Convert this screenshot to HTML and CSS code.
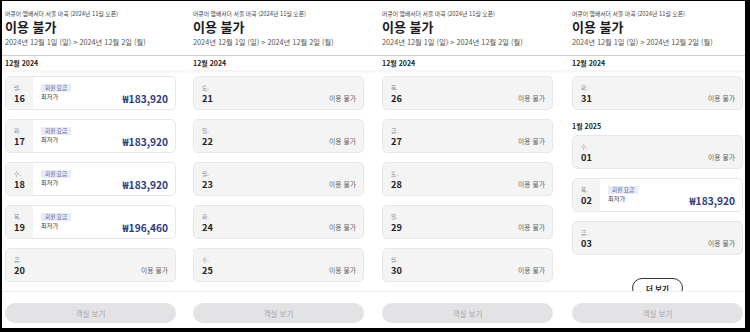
FILE: index.html
```html
<!DOCTYPE html>
<html lang="ko">
<head>
<meta charset="utf-8">
<link rel="stylesheet" href="styles.css">
</head>
<body>
<div class="frame">
  <!-- Panel 1 -->
  <section class="panel p1">
    <header class="head">
      <div class="hotel">머큐어 앰배서더 서울 마곡 (2024년 11월 오픈)</div>
      <h1 class="title">이용 불가</h1>
      <div class="dates">2024년 12월 1일 (일) &gt; 2024년 12월 2일 (월)</div>
    </header>
    <div class="scroll">
      <div class="month sticky">12월 2024</div>
      <div class="list">
        <div class="card ok"><div class="day"><span class="dow">월.</span><span class="num">16</span></div><div class="info"><div class="meta"><span class="badge">회원 요금</span><span class="low">최저가</span></div><span class="price">₩183,920</span></div></div>
        <div class="card ok"><div class="day"><span class="dow">화.</span><span class="num">17</span></div><div class="info"><div class="meta"><span class="badge">회원 요금</span><span class="low">최저가</span></div><span class="price">₩183,920</span></div></div>
        <div class="card ok"><div class="day"><span class="dow">수.</span><span class="num">18</span></div><div class="info"><div class="meta"><span class="badge">회원 요금</span><span class="low">최저가</span></div><span class="price">₩183,920</span></div></div>
        <div class="card ok"><div class="day"><span class="dow">목.</span><span class="num">19</span></div><div class="info"><div class="meta"><span class="badge">회원 요금</span><span class="low">최저가</span></div><span class="price">₩196,460</span></div></div>
        <div class="card na"><div class="day"><span class="dow">금.</span><span class="num">20</span></div><div class="info"><span class="na-text">이용 불가</span></div></div>
      </div>
    </div>
    <footer class="foot"><button class="book">객실 보기</button></footer>
  </section>

  <!-- Panel 2 -->
  <section class="panel p2">
    <header class="head">
      <div class="hotel">머큐어 앰배서더 서울 마곡 (2024년 11월 오픈)</div>
      <h1 class="title">이용 불가</h1>
      <div class="dates">2024년 12월 1일 (일) &gt; 2024년 12월 2일 (월)</div>
    </header>
    <div class="scroll">
      <div class="month sticky">12월 2024</div>
      <div class="list">
        <div class="card na"><div class="day"><span class="dow">토.</span><span class="num">21</span></div><div class="info"><span class="na-text">이용 불가</span></div></div>
        <div class="card na"><div class="day"><span class="dow">일.</span><span class="num">22</span></div><div class="info"><span class="na-text">이용 불가</span></div></div>
        <div class="card na"><div class="day"><span class="dow">월.</span><span class="num">23</span></div><div class="info"><span class="na-text">이용 불가</span></div></div>
        <div class="card na"><div class="day"><span class="dow">화.</span><span class="num">24</span></div><div class="info"><span class="na-text">이용 불가</span></div></div>
        <div class="card na"><div class="day"><span class="dow">수.</span><span class="num">25</span></div><div class="info"><span class="na-text">이용 불가</span></div></div>
      </div>
    </div>
    <footer class="foot"><button class="book">객실 보기</button></footer>
  </section>

  <!-- Panel 3 -->
  <section class="panel p3">
    <header class="head">
      <div class="hotel">머큐어 앰배서더 서울 마곡 (2024년 11월 오픈)</div>
      <h1 class="title">이용 불가</h1>
      <div class="dates">2024년 12월 1일 (일) &gt; 2024년 12월 2일 (월)</div>
    </header>
    <div class="scroll">
      <div class="month sticky">12월 2024</div>
      <div class="list">
        <div class="card na"><div class="day"><span class="dow">목.</span><span class="num">26</span></div><div class="info"><span class="na-text">이용 불가</span></div></div>
        <div class="card na"><div class="day"><span class="dow">금.</span><span class="num">27</span></div><div class="info"><span class="na-text">이용 불가</span></div></div>
        <div class="card na"><div class="day"><span class="dow">토.</span><span class="num">28</span></div><div class="info"><span class="na-text">이용 불가</span></div></div>
        <div class="card na"><div class="day"><span class="dow">일.</span><span class="num">29</span></div><div class="info"><span class="na-text">이용 불가</span></div></div>
        <div class="card na"><div class="day"><span class="dow">월.</span><span class="num">30</span></div><div class="info"><span class="na-text">이용 불가</span></div></div>
      </div>
    </div>
    <footer class="foot"><button class="book">객실 보기</button></footer>
  </section>

  <!-- Panel 4 -->
  <section class="panel p4">
    <header class="head">
      <div class="hotel">머큐어 앰배서더 서울 마곡 (2024년 11월 오픈)</div>
      <h1 class="title">이용 불가</h1>
      <div class="dates">2024년 12월 1일 (일) &gt; 2024년 12월 2일 (월)</div>
    </header>
    <div class="scroll">
      <div class="month sticky">12월 2024</div>
      <div class="list">
        <div class="card na"><div class="day"><span class="dow">화.</span><span class="num">31</span></div><div class="info"><span class="na-text">이용 불가</span></div></div>
        <div class="month inline">1월 2025</div>
        <div class="card na"><div class="day"><span class="dow">수.</span><span class="num">01</span></div><div class="info"><span class="na-text">이용 불가</span></div></div>
        <div class="card ok"><div class="day"><span class="dow">목.</span><span class="num">02</span></div><div class="info"><div class="meta"><span class="badge">회원 요금</span><span class="low">최저가</span></div><span class="price">₩183,920</span></div></div>
        <div class="card na"><div class="day"><span class="dow">금.</span><span class="num">03</span></div><div class="info"><span class="na-text">이용 불가</span></div></div>
        <div class="more-wrap"><button class="more">더 보기</button></div>
      </div>
    </div>
    <footer class="foot"><button class="book">객실 보기</button></footer>
  </section>
</div>
</body>
</html>
```

FILE: styles.css
```css
* { box-sizing: border-box; }

html, body {
  margin: 0;
  padding: 0;
  background: #000;
}

body {
  width: 750px;
  height: 332px;
  overflow: hidden;
  font-family: "Noto Sans CJK KR", "Noto Sans", sans-serif;
  color: #1b1b1f;
}

.frame {
  margin: 1px 5px 0 2px;
  height: 327px;
  background: #fff;
  display: grid;
  grid-template-columns: 187px 189px 190px 177px;
  overflow: hidden;
}

.panel {
  display: flex;
  flex-direction: column;
  height: 327px;
  min-width: 0;
  overflow: hidden;
}

.p1 { --pad: 3px; }
.p2 { --pad: 4px; }
.p3 { --pad: 4px; }
.p4 { --pad: 4px; }

.head {
  padding: 9px 0 8px var(--pad);
  border-bottom: 1px solid #cfcfd2;
  flex: none;
}

.hotel {
  font-size: 5.8px;
  line-height: 8px;
  color: #444;
  white-space: nowrap;
}

.title {
  margin: 1px 0 0;
  font-size: 13px;
  line-height: 16px;
  font-weight: 700;
  color: #1b1b1f;
}

.dates {
  margin-top: 2px;
  font-size: 7.3px;
  line-height: 10px;
  color: #555;
  white-space: nowrap;
}

.scroll {
  flex: 1;
  min-height: 0;
  overflow: hidden;
  position: relative;
}

.month {
  font-size: 7px;
  font-weight: 700;
  line-height: 14px;
  color: #222;
}

.month.sticky {
  position: relative;
  z-index: 2;
  background: #fff;
  padding-left: var(--pad);
  box-shadow: 0 2px 4px rgba(0, 0, 0, 0.06);
}

.month.inline {
  margin: 0 0 -7px 0;
  line-height: 14px;
}

.list {
  padding: 6px 0 0 var(--pad);
  display: flex;
  flex-direction: column;
  gap: 9px;
}

.card {
  width: 171px;
  height: 34px;
  flex: none;
  border: 1px solid #e7e7ea;
  border-radius: 5px;
  display: flex;
  overflow: hidden;
  background: #fff;
}

.card.na { background: #f4f4f5; }

.day {
  width: 27px;
  flex: none;
  padding: 7px 0 0 8px;
  display: flex;
  flex-direction: column;
  background: #f4f4f5;
}

.dow {
  font-size: 5.6px;
  line-height: 8px;
  color: #888;
}

.num {
  font-size: 9.2px;
  line-height: 12px;
  font-weight: 700;
  color: #222;
}

.info {
  flex: 1;
  display: flex;
  justify-content: space-between;
  padding: 0 7px 0 8px;
}

.meta {
  display: flex;
  flex-direction: column;
  align-items: flex-start;
  padding-top: 7px;
}

.badge {
  font-size: 5.6px;
  line-height: 8px;
  padding: 0 4px;
  border-radius: 1px;
  background: #e8eaf5;
  color: #5a64a6;
}

.low {
  font-size: 6.2px;
  line-height: 10px;
  color: #333;
}

.price {
  align-self: flex-end;
  margin-bottom: 3px;
  font-size: 10.2px;
  line-height: 14px;
  font-weight: 700;
  color: #2f3b7e;
}

.na-text {
  margin-left: auto;
  align-self: flex-end;
  margin-bottom: 6px;
  font-size: 6.8px;
  line-height: 10px;
  color: #666;
}

.more-wrap {
  width: 171px;
  display: flex;
  justify-content: center;
  margin-top: 14px;
}

.more {
  font-family: inherit;
  width: 51px;
  height: 20px;
  border: 1px solid #333;
  border-radius: 10px;
  background: #fff;
  font-size: 7.5px;
  font-weight: 700;
  color: #222;
  padding: 0;
}

.foot {
  flex: none;
  height: 37px;
  border-top: 1px solid #f0f0f2;
  background: #fff;
  padding: 11px 0 0 var(--pad);
  position: relative;
  z-index: 3;
}

.book {
  display: block;
  font-family: inherit;
  width: 171px;
  height: 20px;
  border: none;
  border-radius: 10px;
  background: #e3e3e5;
  color: #a6a6aa;
  font-size: 7.5px;
  padding: 0;
}
```
